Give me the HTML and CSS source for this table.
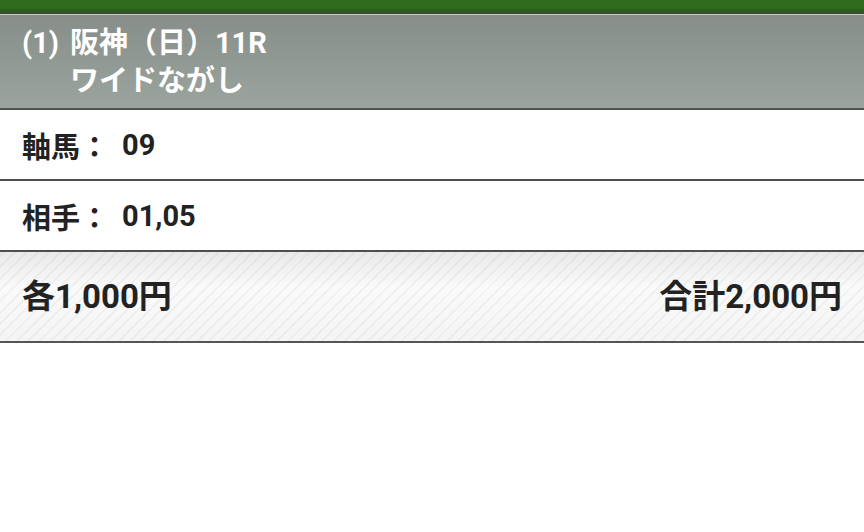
FILE: index.html
```html
<!DOCTYPE html>
<html lang="ja">
<head>
<meta charset="utf-8">
<link rel="stylesheet" href="styles.css">
</head>
<body>
<div class="topbar"></div>
<header class="header">
  <div class="race"><span class="num">(1)</span>阪神（日）11R</div>
  <div class="bet">ワイドながし</div>
</header>
<div class="row"><span class="label">軸馬：</span><span class="val">09</span></div>
<div class="row"><span class="label">相手：</span><span class="val">01,05</span></div>
<div class="total">
  <span>各1,000円</span>
  <span>合計2,000円</span>
</div>
</body>
</html>
```
FILE: styles.css
```css
* { box-sizing: border-box; }
body {
  margin: 0;
  background: #fff;
  font-family: Roboto, "Noto Sans CJK JP", sans-serif;
  font-weight: 700;
}
.topbar {
  height: 14px;
  background: #2e6b1d;
  border-bottom: 2px solid #3a4a36;
  box-shadow: inset 0 -3px 0 #2a5f1b;
}
.header {
  height: 96px;
  padding: 9px 22px 0;
  background: linear-gradient(#878e89, #9ba49e);
  border-bottom: 2px solid #4f524f;
  border-top: 1px solid #c8ccc9;
  color: #fff;
  font-size: 29px;
  line-height: 38px;
}
.num { margin-right: 11px; }
.bet { padding-left: 48px; }
.row {
  height: 71px;
  display: flex;
  align-items: center;
  padding: 0 22px;
  border-bottom: 2px solid #4f4f4f;
  color: #222;
  font-size: 29px;
}
.label { margin-right: 13px; }
.total {
  height: 91px;
  display: flex;
  justify-content: space-between;
  align-items: center;
  padding: 0 22px 6px;
  color: #222;
  font-size: 33px;
  border-bottom: 2px solid #555;
  background:
    repeating-linear-gradient(-45deg, rgba(0,0,0,0) 0 6px, rgba(0,0,0,0.035) 6px 8px),
    linear-gradient(#e9e9e9, #fafafa 40%, #f4f4f4);
}
```
